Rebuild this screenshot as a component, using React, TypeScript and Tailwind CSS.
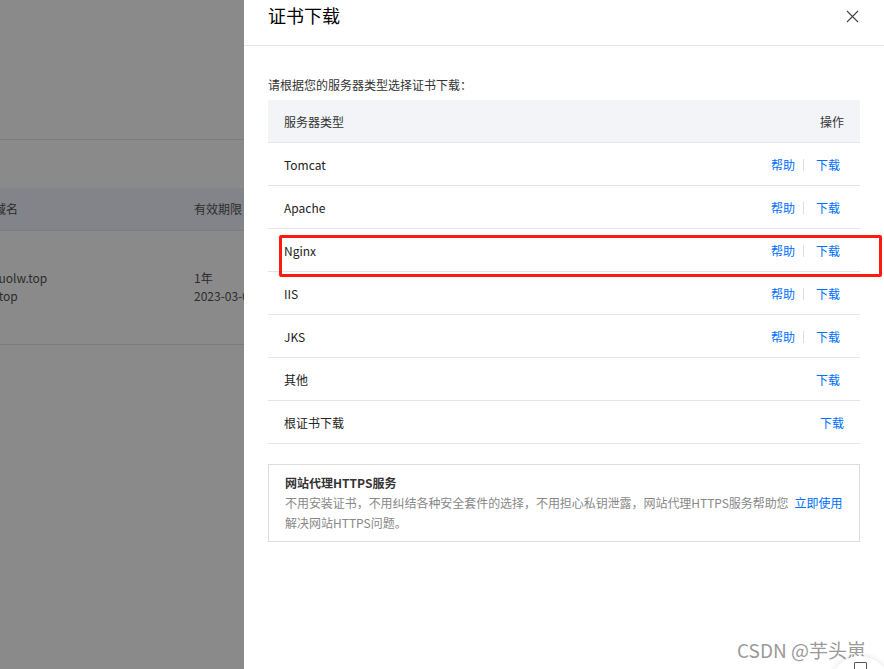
import React from "react";

const rows: { name: string; help: boolean; pr: string }[] = [
  { name: "Tomcat", help: true, pr: "pr-5" },
  { name: "Apache", help: true, pr: "pr-5" },
  { name: "Nginx", help: true, pr: "pr-5" },
  { name: "IIS", help: true, pr: "pr-5" },
  { name: "JKS", help: true, pr: "pr-5" },
  { name: "其他", help: false, pr: "pr-5" },
  { name: "根证书下载", help: false, pr: "pr-4" },
];

function Row({ name, help, pr, highlight }: { name: string; help: boolean; pr: string; highlight?: boolean }) {
  return (
    <div className={`relative h-[43px] border-b border-[#e5e5e5] flex items-center justify-between pl-4 ${pr}`}>
      <span className="text-[12px] leading-[20px] pt-[1px] text-[#222]">{name}</span>
      <div className="flex items-center text-[12px] leading-[20px] pt-[1px] text-[#006eff]">
        {help && (
          <>
            <span>帮助</span>
            <span className="ml-2 mr-3 w-px h-[12px] bg-[#dddddd]"></span>
          </>
        )}
        <span>下载</span>
      </div>
      {highlight && (
        <div className="absolute left-[11px] top-[6px] w-[603px] h-[42px] border-[3px] border-[#ff1a0f] rounded-[2px] pointer-events-none"></div>
      )}
    </div>
  );
}

export default function App() {
  return (
    <div
      className="relative w-[884px] h-[669px] overflow-hidden flex bg-white"
      style={{ fontFamily: '"Noto Sans CJK SC", "Noto Sans", sans-serif' }}
    >
      {/* Underlying page (masked) */}
      <div className="w-[244px] h-full bg-[#8a8a8a] overflow-hidden flex flex-col shrink-0">
        <div className="h-[140px] border-b border-[#7e7e7e]"></div>
        <div className="h-[48px]"></div>
        <div className="h-[43px] bg-[#838489] border-b border-[#7c7c7c] flex items-center text-[12px] text-[#2c2c2c]">
          <span className="w-[200px] shrink-0 -ml-[6px] whitespace-nowrap">域名</span>
          <span className="whitespace-nowrap">有效期限</span>
        </div>
        <div className="h-[114px] border-b border-[#7c7c7c] flex text-[12px] text-[#2c2c2c] leading-[18px] pt-[38px]">
          <div className="w-[203px] shrink-0 -ml-[9px] flex flex-col whitespace-nowrap">
            <span>duolw.top</span>
            <span className="pl-[5px]">.top</span>
          </div>
          <div className="flex flex-col whitespace-nowrap">
            <span>1年</span>
            <span>2023-03-09</span>
          </div>
        </div>
      </div>

      {/* Drawer */}
      <div className="w-[640px] min-w-0 shrink-0 h-full bg-white flex flex-col overflow-hidden">
        <div className="h-[46px] border-b border-[#e5e5e5] flex items-start justify-between pl-6 pr-[25px] shrink-0">
          <span className="text-[18px] leading-[30px] text-[#000]">证书下载</span>
          <svg width="13" height="13" viewBox="0 0 13 13" className="mt-[10px]">
            <path d="M1 1 L12 12 M12 1 L1 12" stroke="#444" strokeWidth="1.1" fill="none" />
          </svg>
        </div>

        <div className="px-6 pt-[29px]">
          <div className="text-[12px] leading-[20px] text-[#333] mb-[5px]">请根据您的服务器类型选择证书下载：</div>

          <div className="flex flex-col">
            <div className="h-[43px] bg-[#f2f4f8] border-b border-[#e5e5e5] flex items-center justify-between px-4">
              <span className="text-[12px] leading-[20px] pt-[1px] text-[#333]">服务器类型</span>
              <span className="text-[12px] leading-[20px] pt-[1px] text-[#333]">操作</span>
            </div>
            {rows.map((r) => (
              <Row key={r.name} name={r.name} help={r.help} pr={r.pr} highlight={r.name === "Nginx"} />
            ))}
          </div>

          <div className="mt-[20px] border border-[#dddddd] px-4 py-2 text-[12px] leading-[20px]">
            <div className="font-bold text-[#333]">网站代理HTTPS服务</div>
            <div className="flex items-center whitespace-nowrap text-[#888]">
              <span className="tracking-[-0.05px]">不用安装证书，不用纠结各种安全套件的选择，不用担心私钥泄露，网站代理HTTPS服务帮助您</span>
              <span className="ml-[6px] text-[#006eff]">立即使用</span>
            </div>
            <div className="text-[#888]">解决网站HTTPS问题。</div>
          </div>
        </div>
      </div>

      {/* Watermark */}
      <div className="absolute left-[737px] top-[637px] text-[19px] leading-[26px] text-[#9a9a9a] whitespace-nowrap">
        CSDN @芋头崽
      </div>
      <div className="absolute left-[830px] top-[656px] w-[60px] h-[60px] rounded-full bg-white shadow-[0_0_6px_rgba(0,0,0,0.12)] flex justify-center pt-[6px]">
        <div className="w-[13px] h-[13px] border-[1.5px] border-[#555] rounded-[1px]"></div>
      </div>
    </div>
  );
}
